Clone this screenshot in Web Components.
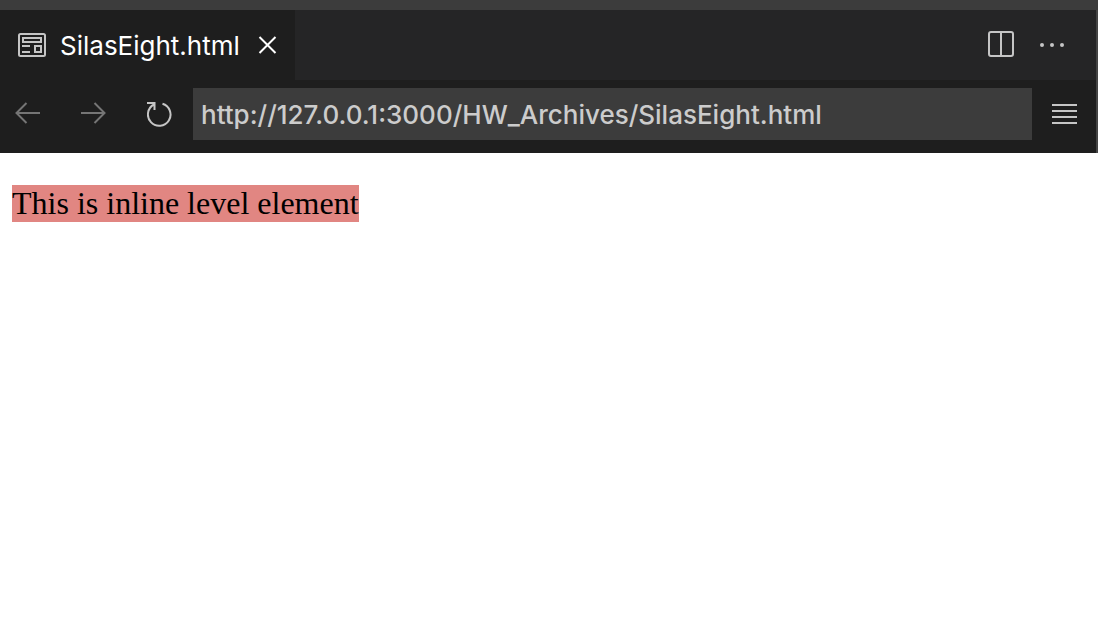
<!DOCTYPE html>
<html lang="en">
<head>
<meta charset="utf-8">
<title>SilasEight.html</title>
<style>
  body { margin: 0; background: #fff; }
</style>
</head>
<body>
<preview-window>
  <editor-tab slot="tab">SilasEight.html</editor-tab>
  <editor-actions slot="actions"></editor-actions>
  <address-bar slot="toolbar" url="http://127.0.0.1:3000/HW_Archives/SilasEight.html"></address-bar>
  <inline-demo>This is inline level element</inline-demo>
</preview-window>

<script>
const define = (name, html, setup) => customElements.define(name, class extends HTMLElement {
  constructor() {
    super();
    this.attachShadow({ mode: "open" }).innerHTML = html;
  }
  connectedCallback() { if (setup) setup(this); }
});

const buttonStyles = `
  button { display: flex; align-items: center; justify-content: center; flex: none;
    margin: 0; padding: 0; border: 0; background: none; color: inherit; }
  svg { display: block; fill: none; stroke: currentColor; stroke-width: 2; }
`;

define("preview-window", `
  <style>
    :host { display: block; font-family: Inter, sans-serif; font-size: 26px; }
    .frame { border-top: 10px solid #3c3c3c; background: #1e1e1e; }
    .chrome { border-right: 2px solid #444; }
    .tabs { display: flex; justify-content: space-between; height: 70px; background: #252526; }
    main { padding: 32px 12px; }
  </style>
  <header class="frame"><div class="chrome">
    <div class="tabs"><slot name="tab"></slot><slot name="actions"></slot></div>
    <slot name="toolbar"></slot>
  </div></header>
  <main><slot></slot></main>
`);

define("editor-tab", `
  <style>${buttonStyles}
    :host { display: flex; align-items: center; box-sizing: border-box; padding: 0 18px;
      background: #1e1e1e; color: #fff; line-height: 32px; }
    .icon { color: #c5c5c5; margin-right: 14px; }
    span { padding-top: 2px; }
    button { margin-left: 18px; }
  </style>
  <svg class="icon" width="28" height="24" viewBox="0 0 28 24" aria-hidden="true">
    <rect x="1" y="1" width="26" height="22" rx="1.5"/>
    <path d="M5 5h18v4H5zM4 13h8M4 19h8M17 13h6v6h-6z"/>
  </svg>
  <span><slot></slot></span>
  <button aria-label="Close">
    <svg width="19" height="18" viewBox="0 0 19 18"><path d="M1.5 1l16 16M17.5 1l-16 16"/></svg>
  </button>
`);

define("editor-actions", `
  <style>${buttonStyles}
    :host { display: flex; align-items: center; gap: 26px; padding-right: 32px; color: #c5c5c5; }
  </style>
  <button aria-label="Split editor">
    <svg width="26" height="28" viewBox="0 0 26 28"><rect x="1" y="1" width="24" height="24" rx="2"/><path d="M13 1v24"/></svg>
  </button>
  <button aria-label="More actions">
    <svg width="24" height="24" viewBox="0 0 24 24"><g fill="currentColor" stroke="none"><circle cx="2" cy="12" r="2"/><circle cx="12" cy="12" r="2"/><circle cx="22" cy="12" r="2"/></g></svg>
  </button>
`);

define("address-bar", `
  <style>${buttonStyles}
    :host { display: flex; align-items: center; padding: 8px 19px 13px 15px; color: #c5c5c5; }
    nav { display: flex; gap: 40px; margin-right: 20px; }
    button:disabled { color: #757575; }
    input { flex: 1; min-width: 0; box-sizing: border-box; height: 52px; margin: 0 20px 0 0;
      padding: 0 8px; border: 0; border-radius: 0; outline: 0; background: #3c3c3c; color: #ccc;
      font: inherit; font-weight: 500; }
  </style>
  <nav aria-label="History">
    <button disabled aria-label="Back"><svg width="26" height="26" viewBox="0 0 26 26"><path d="M25 12H2M11.5 2l-10 10 10 10"/></svg></button>
    <button disabled aria-label="Forward"><svg width="26" height="26" viewBox="0 0 26 26"><path d="M0 12h23M13.5 2l10 10-10 10"/></svg></button>
    <button aria-label="Reload"><svg width="26" height="26" viewBox="0 0 26 26"><path d="M15.5 2.7A11.3 11.3 0 1 1 7 3.5M0 2h7.5v7"/></svg></button>
  </nav>
  <input type="text" aria-label="Address" spellcheck="false">
  <button aria-label="Menu"><svg width="25" height="20" viewBox="0 0 25 20"><path d="M0 1h25M0 7h25M0 13h25M0 19h25"/></svg></button>
`, el => { el.shadowRoot.querySelector("input").value = el.getAttribute("url"); });

define("inline-demo", `
  <style>
    :host { display: block; font: 32px/37px "Liberation Serif", serif; color: #000; }
    span { display: inline-block; background: #e18682; }
  </style>
  <span><slot></slot></span>
`);
</script>
</body>
</html>
